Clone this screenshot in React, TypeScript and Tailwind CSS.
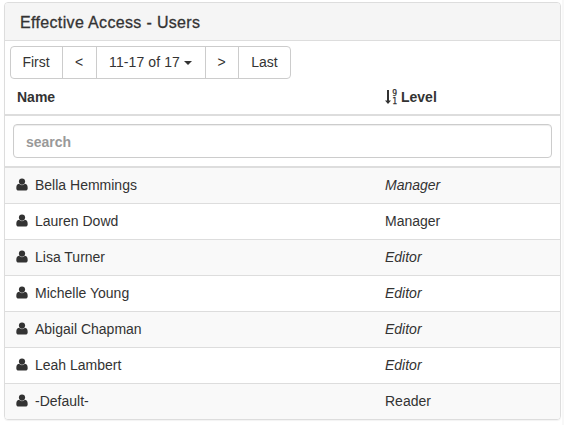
import React from "react";

type Row = { name: string; level: string; inherited: boolean };

const rows: Row[] = [
  { name: "Bella Hemmings", level: "Manager", inherited: true },
  { name: "Lauren Dowd", level: "Manager", inherited: false },
  { name: "Lisa Turner", level: "Editor", inherited: true },
  { name: "Michelle Young", level: "Editor", inherited: true },
  { name: "Abigail Chapman", level: "Editor", inherited: true },
  { name: "Leah Lambert", level: "Editor", inherited: true },
  { name: "-Default-", level: "Reader", inherited: false },
];

function UserIcon() {
  return (
    <svg className="-ml-px mr-[7px] mb-px h-[13px] w-3 shrink-0" viewBox="0 0 12 13" fill="currentColor" aria-hidden="true">
      <circle cx="6" cy="3.6" r="3.1" />
      <path d="M3.1 5.8C1 5.9.3 7.8.3 10.2c0 1.4.9 2.3 2.3 2.3h6.8c1.4 0 2.3-.9 2.3-2.3 0-2.4-.7-4.3-2.8-4.4-.8.9-1.8 1.4-2.9 1.4s-2.1-.5-2.9-1.4z" />
    </svg>
  );
}

function SortIcon() {
  return (
    <span className="mr-1 flex h-[15px] w-3 items-center justify-between">
      <svg className="h-[14px] w-[6px]" viewBox="0 0 6 14" fill="currentColor" aria-hidden="true">
        <path d="M2 0h2v10.5h2L3 14 0 10.5h2z" />
      </svg>
      <span className="flex flex-col pt-[3px] font-['DejaVu_Sans_Mono',monospace] text-[8px] leading-[8px] font-normal [-webkit-text-stroke:0.25px_#333]">
        <span>9</span>
        <span>1</span>
      </span>
    </span>
  );
}

function Pager() {
  const button = "flex h-full items-center justify-center border-r border-[#ccc] pb-[2px] pr-px";
  return (
    <div className="ml-[5px] flex h-[33px] w-[281px] rounded border border-[#ccc]">
      <button className={`${button} w-[52px]`}>First</button>
      <button className={`${button} w-[34px]`}>&lt;</button>
      <button className={`${button} w-[109px]`}>
        <span className="tracking-[0.1px]">11-17 of 17</span>
        <span className="mt-[2px] ml-1 border-x-4 border-t-4 border-x-transparent border-t-[#333]" />
      </button>
      <button className={`${button} w-[33px]`}>&gt;</button>
      <button className="flex flex-1 items-center justify-center pb-[2px]">Last</button>
    </div>
  );
}

export default function App() {
  return (
    <div className="flex h-[425px] w-[564px] bg-white pt-[2px] pl-1 font-['Liberation_Sans',Arial,sans-serif] text-[14px] leading-5 text-[#333]">
      <section className="h-[418px] w-[557px] overflow-hidden rounded border border-[#ddd] shadow-[0_1px_1px_rgba(0,0,0,0.05)]">
        <header className="flex h-[38px] items-center border-b border-[#ddd] bg-[#f5f5f5] pt-[2px] pl-[15px]">
          <h3 className="text-[16px] font-normal tracking-[0.34px] [-webkit-text-stroke:0.3px_#333]">
            Effective Access - Users
          </h3>
        </header>
        <div className="pt-[5px]">
          <Pager />
        </div>
        <div className="flex h-[37px] items-center border-b-2 border-[#ddd] pl-3 font-bold">
          <span className="w-[368px]">Name</span>
          <SortIcon />
          <span>Level</span>
        </div>
        <div className="h-[52px] border-b-2 border-[#ddd] px-2 pt-2">
          <input
            className="block h-[34px] w-[539px] rounded border border-[#ccc] px-3 pt-[2px] font-bold shadow-[inset_0_1px_1px_rgba(0,0,0,0.075)] placeholder:text-[#999]"
            placeholder="search"
          />
        </div>
        {rows.map((row) => (
          <div
            key={row.name}
            className="flex h-9 items-center border-b border-[#ddd] pb-px pl-3 last:border-b-0 last:pb-[2px] odd:bg-[#f9f9f9] even:bg-white"
          >
            <div className="flex w-[368px] items-center">
              <UserIcon />
              <span>{row.name}</span>
            </div>
            <span className={row.inherited ? "italic" : ""}>{row.level}</span>
          </div>
        ))}
      </section>
      <div className="-mt-[2px] ml-px h-[425px] w-[2px] bg-[#f8f8f8]" />
    </div>
  );
}
